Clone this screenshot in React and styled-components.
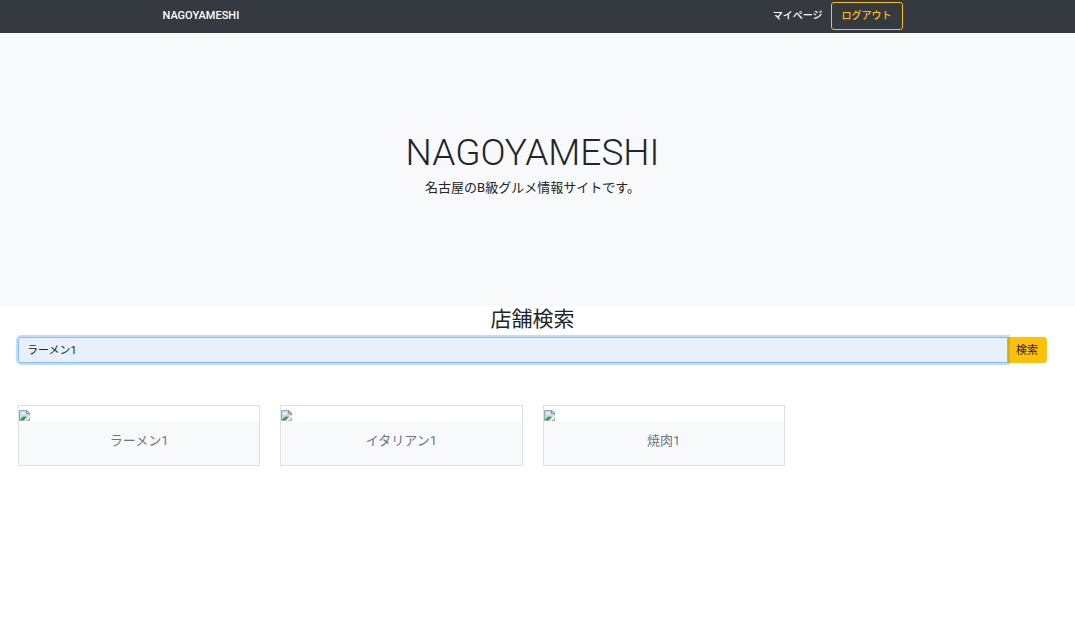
import React from "react";
import styled, { createGlobalStyle } from "styled-components";

const GlobalStyle = createGlobalStyle`
  *, *::before, *::after { box-sizing: border-box; }
  body {
    margin: 0;
    background: #fff;
    color: #212529;
    font-family: Roboto, "Noto Sans CJK JP", sans-serif;
    font-size: 11px;
    line-height: 16px;
  }
  h1, h2, p, ul { margin: 0; padding: 0; }
  a { color: inherit; text-decoration: none; }
`;

const Navbar = styled.header`
  display: flex;
  justify-content: center;
  padding: 2px 28px 3px 18px;
  background: #343a40;
  color: #fff;
`;

const NavInner = styled.div`
  display: flex;
  align-items: center;
  justify-content: space-between;
  flex: 0 1 740px;
`;

const Brand = styled.a`
  font-weight: 500;
`;

const NavLinks = styled.nav`
  display: flex;
  align-items: center;
  gap: 8px;
  font-size: 10px;
  font-weight: 500;
`;

const NavLink = styled.a``;

const Button = styled.button`
  height: 28px;
  padding: 0 10px;
  border: 1px solid #ffc107;
  border-radius: 3px;
  background: transparent;
  color: #ffc107;
  font: inherit;
  cursor: pointer;
`;

const Hero = styled.section`
  padding: 96px 28px 107px 18px;
  background: #f8f9fa;
  text-align: center;
`;

const HeroTitle = styled.h1`
  font-size: 37px;
  font-weight: 300;
  line-height: 48px;
`;

const HeroText = styled.p`
  font-size: 13px;
  line-height: 22px;
`;

const Main = styled.main`
  padding: 0 28px 40px 18px;
`;

const SectionTitle = styled.h2`
  font-size: 21px;
  font-weight: 400;
  line-height: 27px;
  padding-bottom: 4px;
  text-align: center;
`;

const SearchForm = styled.form`
  display: flex;
`;

const SearchInput = styled.input`
  position: relative;
  z-index: 1;
  flex: 1;
  min-width: 0;
  height: 26px;
  padding: 0 8px 3px;
  border: 1px solid #80bdff;
  border-radius: 3px 0 0 3px;
  outline: none;
  background: #e8f0fe;
  box-shadow: 0 0 0 2px rgba(0, 123, 255, 0.25);
  color: #212529;
  font: inherit;
`;

const SearchButton = styled(Button)`
  height: 26px;
  padding: 2px 8px 0;
  margin-left: -1px;
  border-radius: 0 3px 3px 0;
  background: #ffc107;
  color: #212529;
`;

const CardGrid = styled.ul`
  display: grid;
  grid-template-columns: repeat(4, 1fr);
  gap: 20px;
  padding-top: 42px;
  list-style: none;
`;

const Card = styled.li`
  border: 1px solid #dee2e6;
`;

const CardImage = styled.div`
  height: 16px;
  padding-top: 4px;
  svg { display: block; }
`;

const CardLink = styled.a`
  display: block;
  padding: 8px 8px 13px;
  background: #f8f9fa;
  color: #6c757d;
  font-size: 13px;
  line-height: 22px;
  text-align: center;
`;

const MissingImage = () => (
  <svg width="11" height="11" viewBox="0 0 11 11" aria-hidden="true">
    <path d="M0.5 0.5H8L10.5 3V10.5H0.5Z" fill="#c6d8f4" stroke="#a0a4a8" />
    <path d="M2 4.2Q2 3 3.2 3Q4 1.7 5 3Q6 3 6 4.2Z" fill="#fff" />
    <path d="M1 10Q3 6 6 6.5L8 7L5 10Z" fill="#2eae2e" />
    <path d="M5 11L11 5V7L7 11Z" fill="#fff" />
    <path d="M7.5 0.5V3.5H10.5Z" fill="#fff" stroke="#8c9196" />
  </svg>
);

const shops = ["ラーメン1", "イタリアン1", "焼肉1"];

export default function App() {
  return (
    <>
      <GlobalStyle />
      <Navbar>
        <NavInner>
          <Brand href="#">NAGOYAMESHI</Brand>
          <NavLinks>
            <NavLink href="#mypage">マイページ</NavLink>
            <Button type="button">ログアウト</Button>
          </NavLinks>
        </NavInner>
      </Navbar>
      <Hero>
        <HeroTitle>NAGOYAMESHI</HeroTitle>
        <HeroText>名古屋のB級グルメ情報サイトです。</HeroText>
      </Hero>
      <Main>
        <SectionTitle>店舗検索</SectionTitle>
        <SearchForm onSubmit={(e) => e.preventDefault()}>
          <SearchInput type="text" aria-label="店舗検索" defaultValue="ラーメン1" />
          <SearchButton type="submit">検索</SearchButton>
        </SearchForm>
        <CardGrid>
          {shops.map((name) => (
            <Card key={name}>
              <CardImage><MissingImage /></CardImage>
              <CardLink href="#shop">{name}</CardLink>
            </Card>
          ))}
        </CardGrid>
      </Main>
    </>
  );
}
